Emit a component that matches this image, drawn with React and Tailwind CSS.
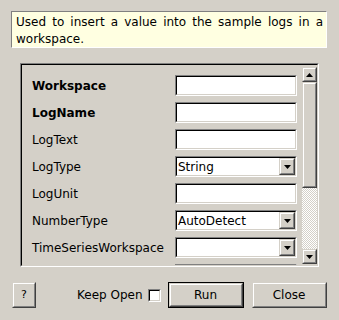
import React from 'react';

const rows = [
    { label: 'Workspace', bold: true, kind: 'text' },
    { label: 'LogName', bold: true, kind: 'text' },
    { label: 'LogText', kind: 'text' },
    { label: 'LogType', kind: 'combo', value: 'String' },
    { label: 'LogUnit', kind: 'text' },
    { label: 'NumberType', kind: 'combo', value: 'AutoDetect' },
    { label: 'TimeSeriesWorkspace', kind: 'combo', value: '' },
    { label: 'DeleteExisting', kind: 'text' },
];

function Arrow({ up }) {
    return (
        <svg width="7" height="4" viewBox="0 0 7 4" className="block">
            {up ? <path d="M3.5 0 L7 4 L0 4 Z" fill="#000" /> : <path d="M0 0 L7 0 L3.5 4 Z" fill="#000" />}
        </svg>
    );
}

function Raised({ className, children }) {
    return (
        <div className={`border border-t-[#d4d0c8] border-l-[#d4d0c8] border-b-[#404040] border-r-[#404040] ${className}`}>
            <div className="w-full h-full border border-t-white border-l-white border-b-[#808080] border-r-[#808080] bg-[#d4d0c8] flex items-center justify-center">
                {children}
            </div>
        </div>
    );
}

function Sunken({ className, inner, children }) {
    return (
        <div className={`border border-t-[#808080] border-l-[#808080] border-b-white border-r-white ${className}`}>
            <div className={`w-full h-full border border-t-black border-l-black border-b-[#d4d0c8] border-r-[#d4d0c8] ${inner}`}>
                {children}
            </div>
        </div>
    );
}

function Field({ row }) {
    if (row.kind === 'combo') {
        return (
            <Sunken className="w-[122px] h-[21px] shrink-0" inner="bg-white flex items-center">
                <span className="flex-1 pl-[1px] leading-none">{row.value}</span>
                <Raised className="w-[16px] h-[17px]">
                    <Arrow />
                </Raised>
            </Sunken>
        );
    }
    return <Sunken className="w-[122px] h-[21px] shrink-0" inner="bg-white" />;
}

export default function App() {
    return (
        <div className="w-[339px] h-[320px] bg-[#d4d0c8] text-black text-[12px] font-['DejaVu_Sans',sans-serif] overflow-hidden pt-[11px]">
            <div className="ml-[11px] w-[316px] h-[37px] bg-[#ffffe1] border border-t-[#808080] border-l-[#808080] border-b-white border-r-white pl-[4px] pr-[3px] pt-[2px] leading-[17px] text-justify">
                Used to insert a value into the sample logs in a workspace.
            </div>

            <Sunken className="ml-[20px] mt-[15px] w-[299px] h-[204px]" inner="flex overflow-hidden">
                <div className="w-[280px] h-full overflow-hidden pl-[10px] pt-[10px] flex flex-col gap-[6px]">
                    {rows.map((row) => (
                        <div key={row.label} className="flex items-center h-[21px] shrink-0">
                            <span className={`w-[143px] shrink-0 ${row.bold ? 'font-bold' : ''}`}>{row.label}</span>
                            <Field row={row} />
                        </div>
                    ))}
                </div>
                <div className="w-[15px] flex flex-col pt-[2px] pb-[1px]">
                    <Raised className="w-[15px] h-[15px] shrink-0">
                        <Arrow up />
                    </Raised>
                    <Raised className="w-[15px] h-[106px] shrink-0" />
                    <div className="flex-1 bg-[conic-gradient(#ffffff_25%,#d4d0c8_0_50%,#ffffff_0_75%,#d4d0c8_0)] bg-[length:2px_2px]" />
                    <Raised className="w-[15px] h-[15px] shrink-0">
                        <Arrow />
                    </Raised>
                </div>
            </Sunken>

            <div className="mt-[15px] flex items-center h-[26px]">
                <Raised className="ml-[12px] w-[24px] h-[26px] text-[11px] shrink-0">?</Raised>
                <span className="ml-[41px] whitespace-nowrap shrink-0 leading-[18px]">Keep Open</span>
                <Sunken className="ml-[5px] w-[13px] h-[13px] shrink-0" inner="bg-white" />
                <div className="ml-[7px] border border-black shrink-0">
                    <Raised className="w-[74px] h-[24px]">Run</Raised>
                </div>
                <Raised className="ml-[8px] w-[75px] h-[26px] shrink-0">Close</Raised>
            </div>
        </div>
    );
}
